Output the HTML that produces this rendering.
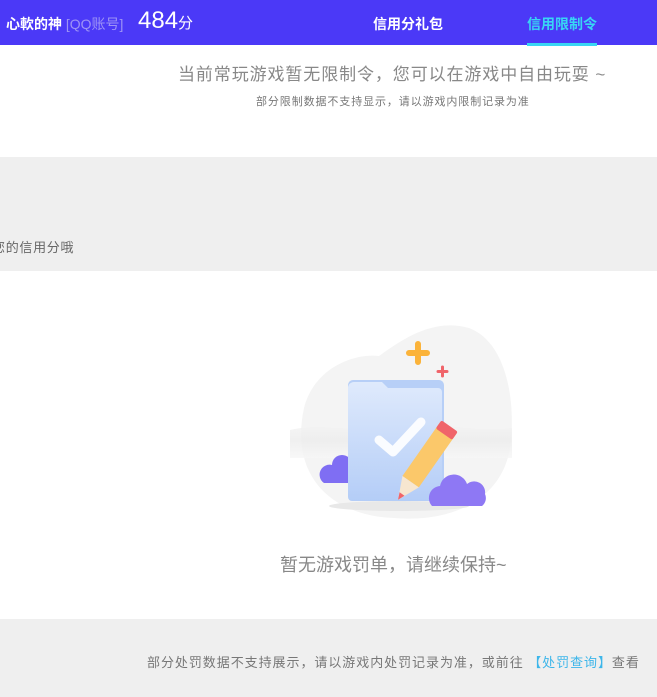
<!DOCTYPE html>
<html><head><meta charset="utf-8"><style>
*{margin:0;padding:0;box-sizing:border-box}
body{width:657px;height:697px;overflow:hidden;background:#fff;font-family:"Liberation Sans","Noto Sans CJK SC",sans-serif;position:relative}
.a{position:absolute;white-space:nowrap}
</style></head><body>
<div class="a" style="left:0;top:0;width:657px;height:45px;background:#4b39f7"></div>
<div class="a" style="left:6px;top:14px;font-size:14px;color:#fff;font-weight:bold">心軟的神 <span style="color:#9d93f5;font-weight:normal">[QQ账号]</span></div>
<div class="a" style="left:138px;top:7px;font-size:24px;color:#fff">484<span style="font-size:15px">分</span></div>
<div class="a" style="left:373px;top:14px;font-size:14px;color:#fff;font-weight:bold">信用分礼包</div>
<div class="a" style="left:527px;top:14px;font-size:14px;color:#38d6f4;font-weight:bold">信用限制令</div>
<div class="a" style="left:527px;top:43px;width:70px;height:3px;background:#38d6f4"></div>

<div class="a" style="left:178px;top:60px;font-size:17px;color:#888;letter-spacing:0.9px">当前常玩游戏暂无限制令，您可以在游戏中自由玩耍 ~</div>
<div class="a" style="left:256px;top:93px;font-size:11px;color:#777;letter-spacing:0.9px">部分限制数据不支持显示，请以游戏内限制记录为准</div>

<div class="a" style="left:0;top:157px;width:657px;height:114px;background:#efefef"></div>
<div class="a" style="left:-8px;top:237px;font-size:13px;color:#666;letter-spacing:0.7px">您的信用分哦</div>

<svg class="a" style="left:284px;top:318px" width="232" height="212" viewBox="0 0 232 212">
<defs><linearGradient id="g" x1="0" y1="0" x2="0" y2="1"><stop offset="0" stop-color="#dfeafc"/><stop offset="1" stop-color="#b4cdf7"/></linearGradient>
<linearGradient id="b" x1="0" y1="0" x2="0" y2="1"><stop offset="0" stop-color="#f4f4f4"/><stop offset=".5" stop-color="#ececec"/><stop offset="1" stop-color="#f6f6f6"/></linearGradient></defs>
<path d="M20 90 C30 50 70 35 95 38 C120 20 150 0 185 10 C225 25 232 90 226 130 C218 180 170 205 110 200 C50 198 5 160 20 90Z" fill="#f4f4f4"/>
<path d="M6 112 C40 104 70 116 100 108 C140 98 180 116 228 110 L228 140 L6 140Z" fill="url(#b)" opacity=".8"/>
<ellipse cx="115" cy="188" rx="70" ry="5" fill="#e8e8e8"/>
<path d="M40 165 a10 10 0 0 1 8 -18 a10 10 0 0 1 20 0 v18z" fill="#7f6ef3"/>
<rect x="64" y="62" width="96" height="120" rx="5" fill="#b7cff7"/>
<path d="M64 70 a6 6 0 0 1 6 -6 h28 l6 6 h50 a4 4 0 0 1 4 4 v106 a3 3 0 0 1 -3 3 h-87 a4 4 0 0 1 -4 -4z" fill="url(#g)"/>
<path d="M95 122 l14 12 l28 -30" stroke="#fff" stroke-width="9" fill="none" stroke-linecap="round" stroke-linejoin="round" opacity=".9"/>
<g transform="rotate(35 135 150)">
<rect x="126" y="100" width="20" height="66" fill="#fbc86a"/>
<rect x="126" y="98" width="20" height="10" rx="2" fill="#f0646a"/>
<path d="M126 166 h20 l-10 22z" fill="#f7e6d0"/>
<path d="M133 181 h6 l-3 7z" fill="#f0646a"/>
</g>
<path d="M148 188 a12 12 0 0 1 8 -20 a14 14 0 0 1 27 -2 a11 11 0 0 1 18 10 a10 10 0 0 1 -3 12z" fill="#8e78f4"/>
<path d="M125 32 h6 v-6 a3 3 0 0 1 6 0 v6 h6 a3 3 0 0 1 0 6 h-6 v6 a3 3 0 0 1 -6 0 v-6 h-6 a3 3 0 0 1 0 -6z" fill="#fbb33a"/>
<path d="M154 52 h3 v-3 a1.5 1.5 0 0 1 3 0 v3 h3 a1.5 1.5 0 0 1 0 3 h-3 v3 a1.5 1.5 0 0 1 -3 0 v-3 h-3 a1.5 1.5 0 0 1 0 -3z" fill="#f0646a"/>
</svg>

<div class="a" style="left:280px;top:551px;font-size:18px;color:#888">暂无游戏罚单，请继续保持~</div>

<div class="a" style="left:0;top:619px;width:657px;height:78px;background:#efefef"></div>
<div class="a" style="left:147px;top:652px;font-size:13px;color:#777;letter-spacing:0.95px">部分处罚数据不支持展示，请以游戏内处罚记录为准，或前往 <span style="color:#3db6ea">【处罚查询】</span>查看</div>
</body></html>
